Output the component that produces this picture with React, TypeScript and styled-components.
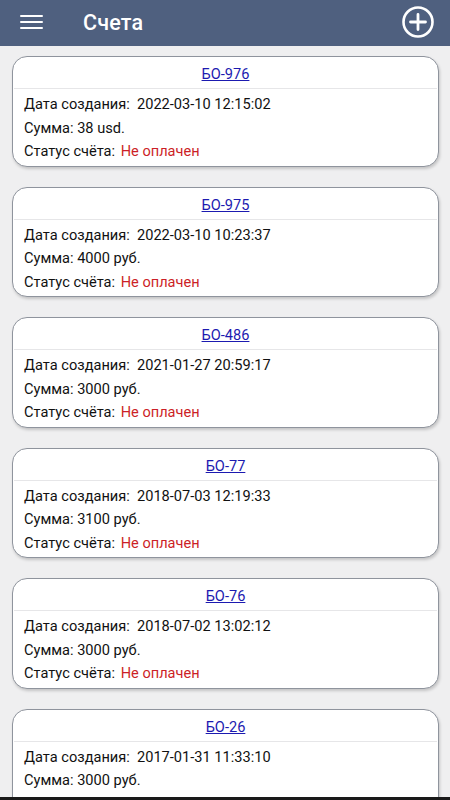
import React from "react";
import styled, { createGlobalStyle } from "styled-components";

const Global = createGlobalStyle`
  html, body { margin: 0; padding: 0; background: #efeff0; }
  body { font-family: Roboto, "Noto Sans", Arial, sans-serif; }
  * { box-sizing: border-box; }
`;

const Page = styled.div`
  width: 450px;
  min-height: 800px;
  background: #efeff0;
  overflow: hidden;
`;

const Header = styled.header`
  height: 46px;
  background: #4f607f;
  display: flex;
  align-items: center;
  padding: 0 15px 0 20px;
  color: #fff;
`;

const MenuButton = styled.div`
  width: 23px;
  display: flex;
  flex-direction: column;
  gap: 4px;
  margin-top: -2px;
  span {
    display: block;
    height: 2px;
    background: #fff;
    border-radius: 1px;
  }
`;

const Title = styled.h1`
  margin: -2px 0 0 40px;
  font-size: 21.5px;
  font-weight: 500;
  flex: 1;
  letter-spacing: 0.2px;
`;

const List = styled.div`
  display: flex;
  flex-direction: column;
  gap: 20px;
  padding: 10px 11px 0 12px;
`;

const Card = styled.div`
  background: #fff;
  border: 1px solid #8f949d;
  border-radius: 15px;
  box-shadow: 1px 2px 3px rgba(0, 0, 0, 0.18);
  overflow: hidden;
`;

const CardHead = styled.div`
  height: 32px;
  display: flex;
  align-items: center;
  justify-content: center;
  border-bottom: 1px solid #e6e6e8;
  margin: 0 1px;
`;

const Link = styled.a`
  color: #1c1ab0;
  font-size: 14.6px;
  text-decoration: underline;
  margin-top: 3px;
`;

const CardBody = styled.div`
  padding: 4px 11px 2px 11px;
`;

const Row = styled.div`
  font-size: 14.6px;
  line-height: 23.5px;
  color: #111;
  white-space: pre;
`;

const Status = styled.span`
  color: #cc1f27;
  margin-left: 2px;
`;

const BottomBar = styled.div`
  position: fixed;
  left: 0;
  right: 0;
  bottom: 0;
  height: 3px;
  background: #1a1a1a;
`;

const invoices = [
  { id: "БО-976", date: "2022-03-10 12:15:02", sum: "38 usd." },
  { id: "БО-975", date: "2022-03-10 10:23:37", sum: "4000 руб." },
  { id: "БО-486", date: "2021-01-27 20:59:17", sum: "3000 руб." },
  { id: "БО-77", date: "2018-07-03 12:19:33", sum: "3100 руб." },
  { id: "БО-76", date: "2018-07-02 13:02:12", sum: "3000 руб." },
  { id: "БО-26", date: "2017-01-31 11:33:10", sum: "3000 руб." },
];

export default function App() {
  return (
    <Page>
      <Global />
      <Header>
        <MenuButton>
          <span />
          <span />
          <span />
        </MenuButton>
        <Title>Счета</Title>
        <svg width="34" height="34" viewBox="0 0 34 34" style={{ marginTop: -3 }}>
          <circle cx="17" cy="17" r="14.5" fill="none" stroke="#fff" strokeWidth="2.6" />
          <path d="M17 9.5v15M9.5 17h15" stroke="#fff" strokeWidth="2.8" strokeLinecap="round" />
        </svg>
      </Header>
      <List>
        {invoices.map((inv) => (
          <Card key={inv.id}>
            <CardHead>
              <Link href="#">{inv.id}</Link>
            </CardHead>
            <CardBody>
              <Row>Дата создания:  {inv.date}</Row>
              <Row>Сумма: {inv.sum}</Row>
              <Row>
                Статус счёта: <Status>Не оплачен</Status>
              </Row>
            </CardBody>
          </Card>
        ))}
      </List>
      <BottomBar />
    </Page>
  );
}
